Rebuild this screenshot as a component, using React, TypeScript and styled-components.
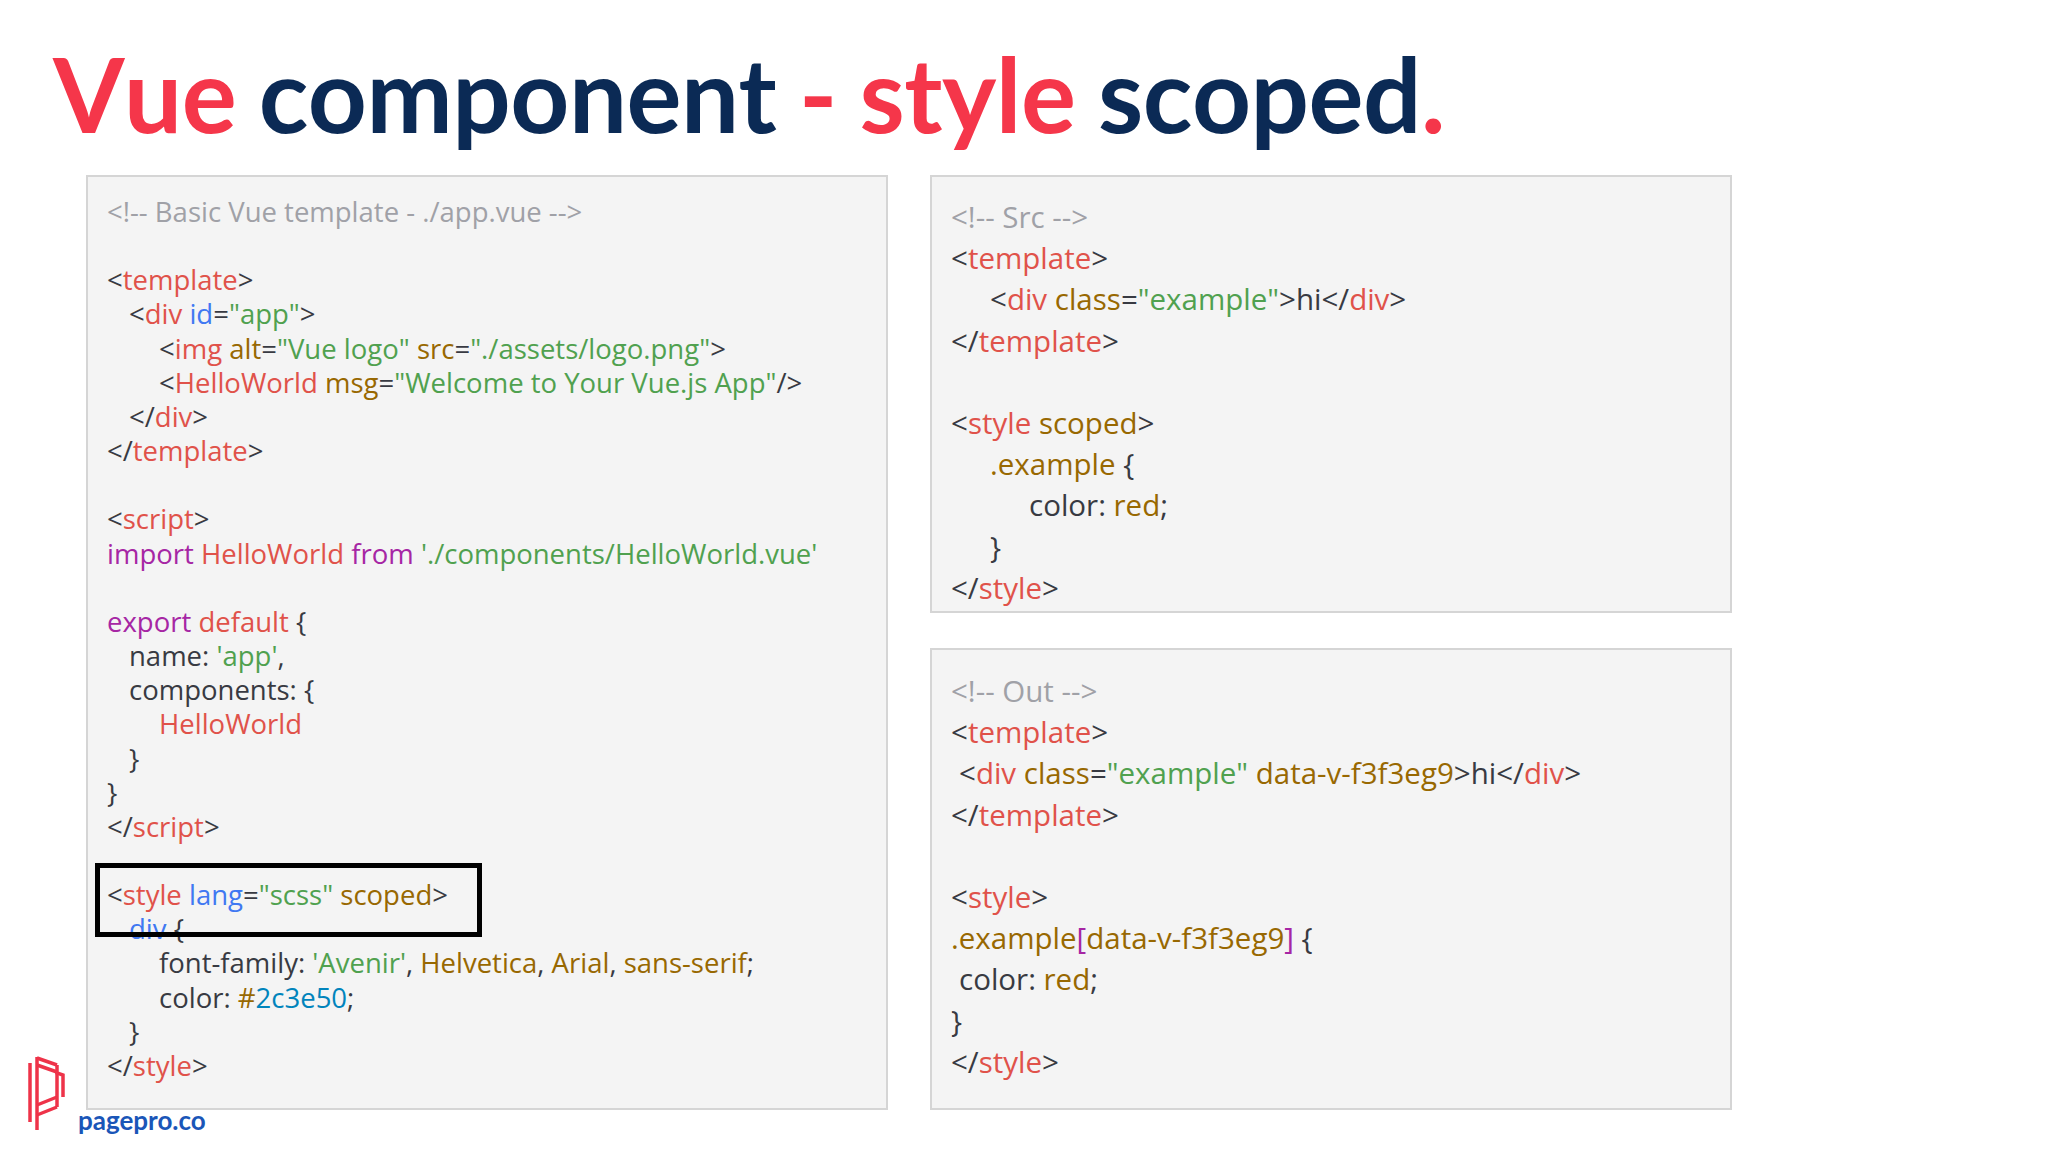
import React from "react";
import styled, { createGlobalStyle } from "styled-components";

const Global = createGlobalStyle`
  html, body { margin: 0; padding: 0; background: #fff; }
`;

const Slide = styled.div`
  width: 2048px;
  height: 1152px;
  overflow: hidden;
  background: #fff;
  padding: 0 0 0 52px;
  box-sizing: border-box;
  font-family: "Lato", sans-serif;
`;

const Title = styled.h1`
  margin: 0;
  padding: 37px 0 0 1px;
  height: 175px;
  box-sizing: border-box;
  font-family: "Lato", sans-serif;
  font-weight: 700;
  font-size: 103px;
  line-height: 113px;
  letter-spacing: -0.5px;
  word-spacing: -2px;
  font-kerning: none;
  white-space: pre;
  color: #0b2a55;
`;

const Accent = styled.span`
  color: #f5364a;
`;

const Columns = styled.div`
  display: flex;
  gap: 42px;
  margin-left: 34px;
`;

const RightColumn = styled.div`
  display: flex;
  flex-direction: column;
  gap: 35px;
`;

const Panel = styled.div<{ $h: number; $top: number; $pitch: number; $size: number }>`
  position: relative;
  width: 802px;
  height: ${(p) => p.$h}px;
  box-sizing: border-box;
  padding: ${(p) => p.$top}px 0 0 19px;
  background: #f4f4f4;
  border: 2px solid #d5d5d5;
  font-family: "Open Sans", sans-serif;
  font-weight: 400;
  font-size: ${(p) => p.$size}px;
  line-height: ${(p) => p.$pitch}px;
  color: #383a42;
`;

const Line = styled.div<{ $indent: number; $pitch: number }>`
  height: ${(p) => p.$pitch}px;
  padding-left: ${(p) => p.$indent}px;
  white-space: pre;
`;

const colors: Record<string, string> = {
  t: "#383a42",
  c: "#a0a1a7",
  r: "#e0524a",
  b: "#4078f2",
  a: "#986801",
  g: "#50a14f",
  p: "#a626a4",
  k: "#0184bc",
};

const Tok = styled.span<{ $k: string }>`
  color: ${(p) => colors[p.$k]};
`;

const Highlight = styled.div`
  position: absolute;
  left: 7px;
  top: 686px;
  width: 387px;
  height: 74px;
  box-sizing: border-box;
  border: 5px solid #000;
`;

const Brand = styled.div`
  display: flex;
  align-items: flex-end;
  margin: -54px 0 0 -24px;
  height: 74px;
`;

const BrandName = styled.span`
  margin: 0 0 -3px 6px;
  font-family: "Lato", sans-serif;
  font-weight: 700;
  font-size: 26px;
  line-height: 26px;
  color: #1a56b8;
`;

type Row = [number, ...[string, string][]];

const left: Row[] = [
  [0, ["c", "<!-- Basic Vue template - ./app.vue -->"]],
  [0],
  [0, ["t", "<"], ["r", "template"], ["t", ">"]],
  [22, ["t", "<"], ["r", "div"], ["t", " "], ["b", "id"], ["t", "="], ["g", "\"app\""], ["t", ">"]],
  [52, ["t", "<"], ["r", "img"], ["t", " "], ["a", "alt"], ["t", "="], ["g", "\"Vue logo\""], ["t", " "], ["a", "src"], ["t", "="], ["g", "\"./assets/logo.png\""], ["t", ">"]],
  [52, ["t", "<"], ["r", "HelloWorld"], ["t", " "], ["a", "msg"], ["t", "="], ["g", "\"Welcome to Your Vue.js App\""], ["t", "/>"]],
  [22, ["t", "</"], ["r", "div"], ["t", ">"]],
  [0, ["t", "</"], ["r", "template"], ["t", ">"]],
  [0],
  [0, ["t", "<"], ["r", "script"], ["t", ">"]],
  [0, ["p", "import"], ["t", " "], ["r", "HelloWorld"], ["t", " "], ["p", "from"], ["t", " "], ["g", "'./components/HelloWorld.vue'"]],
  [0],
  [0, ["p", "export"], ["t", " "], ["r", "default"], ["t", " {"]],
  [22, ["t", "name: "], ["g", "'app'"], ["t", ","]],
  [22, ["t", "components: {"]],
  [52, ["r", "HelloWorld"]],
  [22, ["t", "}"]],
  [0, ["t", "}"]],
  [0, ["t", "</"], ["r", "script"], ["t", ">"]],
  [0],
  [0, ["t", "<"], ["r", "style"], ["t", " "], ["b", "lang"], ["t", "="], ["g", "\"scss\""], ["t", " "], ["a", "scoped"], ["t", ">"]],
  [22, ["b", "div"], ["t", " {"]],
  [52, ["t", "font-family: "], ["g", "'Avenir'"], ["t", ", "], ["a", "Helvetica"], ["t", ", "], ["a", "Arial"], ["t", ", "], ["a", "sans-serif"], ["t", ";"]],
  [52, ["t", "color: "], ["a", "#"], ["k", "2c3e50"], ["t", ";"]],
  [22, ["t", "}"]],
  [0, ["t", "</"], ["r", "style"], ["t", ">"]],
];

const src: Row[] = [
  [0, ["c", "<!-- Src -->"]],
  [0, ["t", "<"], ["r", "template"], ["t", ">"]],
  [39, ["t", "<"], ["r", "div"], ["t", " "], ["a", "class"], ["t", "="], ["g", "\"example\""], ["t", ">hi</"], ["r", "div"], ["t", ">"]],
  [0, ["t", "</"], ["r", "template"], ["t", ">"]],
  [0],
  [0, ["t", "<"], ["r", "style"], ["t", " "], ["a", "scoped"], ["t", ">"]],
  [39, ["a", ".example"], ["t", " {"]],
  [78, ["t", "color: "], ["a", "red"], ["t", ";"]],
  [39, ["t", "}"]],
  [0, ["t", "</"], ["r", "style"], ["t", ">"]],
];

const out: Row[] = [
  [0, ["c", "<!-- Out -->"]],
  [0, ["t", "<"], ["r", "template"], ["t", ">"]],
  [8, ["t", "<"], ["r", "div"], ["t", " "], ["a", "class"], ["t", "="], ["g", "\"example\""], ["t", " "], ["a", "data-v-f3f3eg9"], ["t", ">hi</"], ["r", "div"], ["t", ">"]],
  [0, ["t", "</"], ["r", "template"], ["t", ">"]],
  [0],
  [0, ["t", "<"], ["r", "style"], ["t", ">"]],
  [0, ["a", ".example"], ["p", "["], ["a", "data-v-f3f3eg9"], ["p", "]"], ["t", " {"]],
  [8, ["t", "color: "], ["a", "red"], ["t", ";"]],
  [0, ["t", "}"]],
  [0, ["t", "</"], ["r", "style"], ["t", ">"]],
];

const Code = ({ rows, pitch }: { rows: Row[]; pitch: number }) => (
  <>
    {rows.map(([indent, ...toks], i) => (
      <Line key={i} $indent={indent} $pitch={pitch}>
        {toks.map(([k, text], j) => (
          <Tok key={j} $k={k}>
            {text}
          </Tok>
        ))}
      </Line>
    ))}
  </>
);

const Logo = () => (
  <svg width="44" height="74" viewBox="0 0 44 74" fill="none" stroke="#ee3349" strokeWidth="3.5">
    <path d="M2 7V66" />
    <path d="M9 1V74" />
    <path d="M9 2L29 9M9 9L29 16" />
    <path d="M29 9V17L35 19V41" />
    <path d="M29 17V51" />
    <path d="M9 49L29 41M9 59L29 51" />
  </svg>
);

export default function App() {
  return (
    <Slide>
      <Global />
      <Title>
        <Accent>Vue</Accent> component <Accent>- style</Accent> scoped<Accent>.</Accent>
      </Title>
      <Columns>
        <Panel $h={935} $top={18} $pitch={34.16} $size={27.5}>
          <Code rows={left} pitch={34.16} />
          <Highlight />
        </Panel>
        <RightColumn>
          <Panel $h={438} $top={19} $pitch={41.2} $size={29.5}>
            <Code rows={src} pitch={41.2} />
          </Panel>
          <Panel $h={462} $top={20} $pitch={41.2} $size={29.5}>
            <Code rows={out} pitch={41.2} />
          </Panel>
        </RightColumn>
      </Columns>
      <Brand>
        <Logo />
        <BrandName>pagepro.co</BrandName>
      </Brand>
    </Slide>
  );
}
